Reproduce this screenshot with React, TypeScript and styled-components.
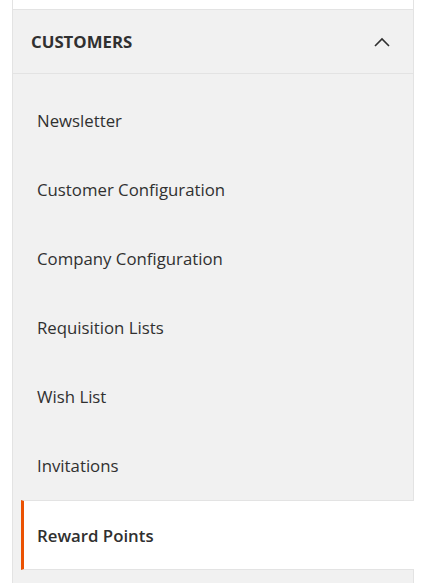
import React from "react";
import styled, { createGlobalStyle } from "styled-components";

const Global = createGlobalStyle`
  html, body { margin: 0; padding: 0; background: #ffffff; }
  body { font-family: "Open Sans", "Noto Sans", sans-serif; }
  * { box-sizing: border-box; }
`;

const Page = styled.div`
  padding-left: 12px;
  width: 430px;
  height: 583px;
  overflow: hidden;
`;

const Panel = styled.nav`
  width: 402px;
  border-left: 1px solid #e3e3e3;
  border-right: 1px solid #e3e3e3;
`;

const PrevSection = styled.div`
  height: 10px;
  background: #ffffff;
  border-bottom: 1px solid #e3e3e3;
`;

const Section = styled.div`
  background: #f1f1f1;
`;

const Header = styled.div`
  height: 64px;
  display: flex;
  align-items: center;
  justify-content: space-between;
  padding: 0 23px 0 18px;
  border-bottom: 1px solid #e3e3e3;
`;

const Title = styled.span`
  font-size: 16.8px;
  font-weight: 700;
  color: #303030;
`;

const List = styled.ul`
  list-style: none;
  margin: 0;
  padding: 12px 0 20px;
`;

const Item = styled.li<{ $active?: boolean }>`
  height: ${(p) => (p.$active ? "70px" : "69px")};
  display: flex;
  align-items: center;
  font-size: 16.8px;
  color: #303030;
  border-top: 1px solid ${(p) => (p.$active ? "#e3e3e3" : "transparent")};
  border-bottom: 1px solid ${(p) => (p.$active ? "#e3e3e3" : "transparent")};
  background: ${(p) => (p.$active ? "#ffffff" : "transparent")};
  margin-left: ${(p) => (p.$active ? "8px" : "0")};
  margin-right: ${(p) => (p.$active ? "-1px" : "0")};
  border-left: ${(p) => (p.$active ? "3px solid #eb5202" : "none")};
  padding-left: ${(p) => (p.$active ? "13px" : "24px")};
  font-weight: ${(p) => (p.$active ? 600 : 400)};
`;

const Chevron = () => (
  <svg width="16" height="10" viewBox="0 0 16 10" fill="none">
    <path d="M1 9 L8 2 L15 9" stroke="#303030" strokeWidth="1.6" />
  </svg>
);

const items = [
  "Newsletter",
  "Customer Configuration",
  "Company Configuration",
  "Requisition Lists",
  "Wish List",
  "Invitations",
  "Reward Points",
];

export default function App() {
  return (
    <Page>
      <Global />
      <Panel>
        <PrevSection />
        <Section>
          <Header>
            <Title>CUSTOMERS</Title>
            <Chevron />
          </Header>
          <List>
            {items.map((label) => (
              <Item key={label} $active={label === "Reward Points"}>
                {label}
              </Item>
            ))}
          </List>
        </Section>
      </Panel>
    </Page>
  );
}
